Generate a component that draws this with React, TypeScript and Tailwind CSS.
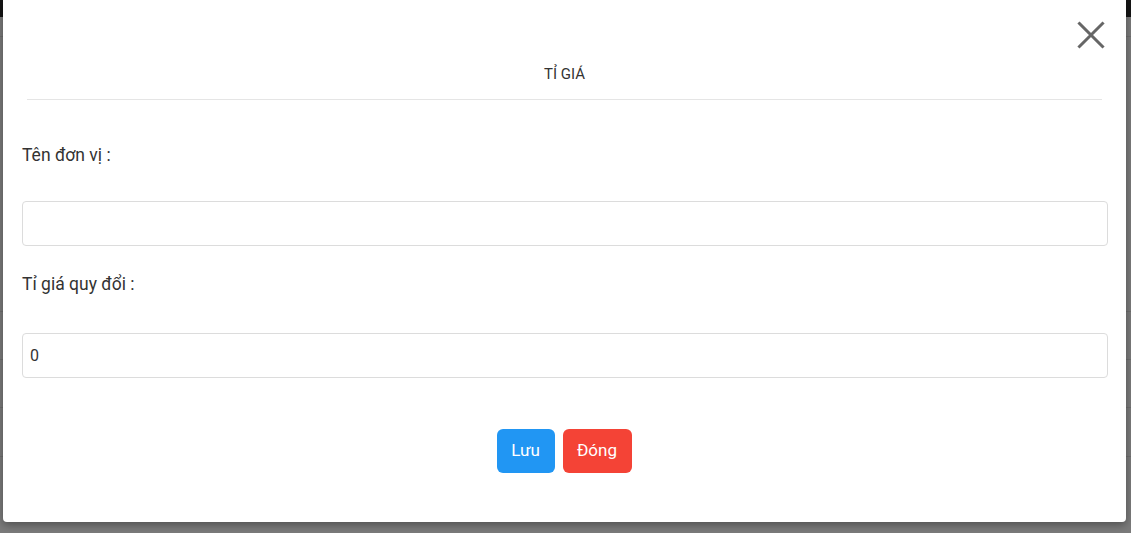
import React, { useState } from 'react';

const ExchangeRateModal: React.FC = () => {
  const [unitName, setUnitName] = useState('');
  const [rate, setRate] = useState('0');

  return (
    <div className="absolute left-[3px] top-0 w-[1123px] h-[522px] bg-white rounded-b-[4px] shadow-[0_3px_8px_rgba(0,0,0,0.35)]">
      {/* Nút đóng */}
      <button className="absolute top-[21px] right-[21px] w-[28px] h-[28px] flex items-center justify-center">
        <svg width="28" height="28" viewBox="0 0 28 28">
          <path d="M2.5 2.5 L25.5 25.5 M25.5 2.5 L2.5 25.5" stroke="#666666" strokeWidth="3" strokeLinecap="square" />
        </svg>
      </button>

      {/* Tiêu đề */}
      <div className="mx-6 pt-[65px] pb-[16px] border-b border-[#e5e5e5] text-center">
        <h3 className="text-[15px] leading-[18px] text-[#333]">TỈ GIÁ</h3>
      </div>

      {/* Nội dung */}
      <div className="pl-[19px] pr-[18px] text-[#333]">
        <label className="block mt-[43px] text-[17.5px] leading-6">Tên đơn vị :</label>
        <input
          value={unitName}
          onChange={(e) => setUnitName(e.target.value)}
          className="mt-[34px] block w-full h-[45px] px-[7px] border border-[#dcdcdc] rounded-[4px] text-base text-[#333] outline-none"
        />

        <label className="block mt-[26px] text-[17.5px] leading-6">Tỉ giá quy đổi :</label>
        <input
          value={rate}
          onChange={(e) => setRate(e.target.value)}
          className="mt-[37px] block w-full h-[45px] px-[7px] border border-[#dcdcdc] rounded-[4px] text-base text-[#333] outline-none"
        />

        <div className="mt-[51px] flex justify-center gap-2 pr-[2px]">
          <button className="w-[58px] h-[44px] rounded-[6px] bg-[#2196f3] text-white text-[17px] font-normal">
            Lưu
          </button>
          <button className="w-[69px] h-[44px] rounded-[6px] bg-[#f44336] text-white text-[17px] font-normal">
            Đóng
          </button>
        </div>
      </div>
    </div>
  );
};

export default function App() {
  return (
    <div
      className="relative w-[1131px] h-[533px] overflow-hidden bg-[#7b7b7b]"
      style={{ fontFamily: 'Roboto, "Noto Sans", sans-serif' }}
    >
      {/* Nền phía sau (đã bị làm mờ) */}
      <div className="h-[17px] bg-[#151515]" />
      <div className="h-[20px] border-b border-[#6e6e6e]" />
      <div className="h-[275px] border-b border-[#6e6e6e]" />
      <div className="h-[48px] border-b border-[#6e6e6e]" />
      <div className="h-[48px] border-b border-[#6e6e6e]" />
      <div className="h-[49px] border-b border-[#6e6e6e]" />

      <ExchangeRateModal />
    </div>
  );
}
